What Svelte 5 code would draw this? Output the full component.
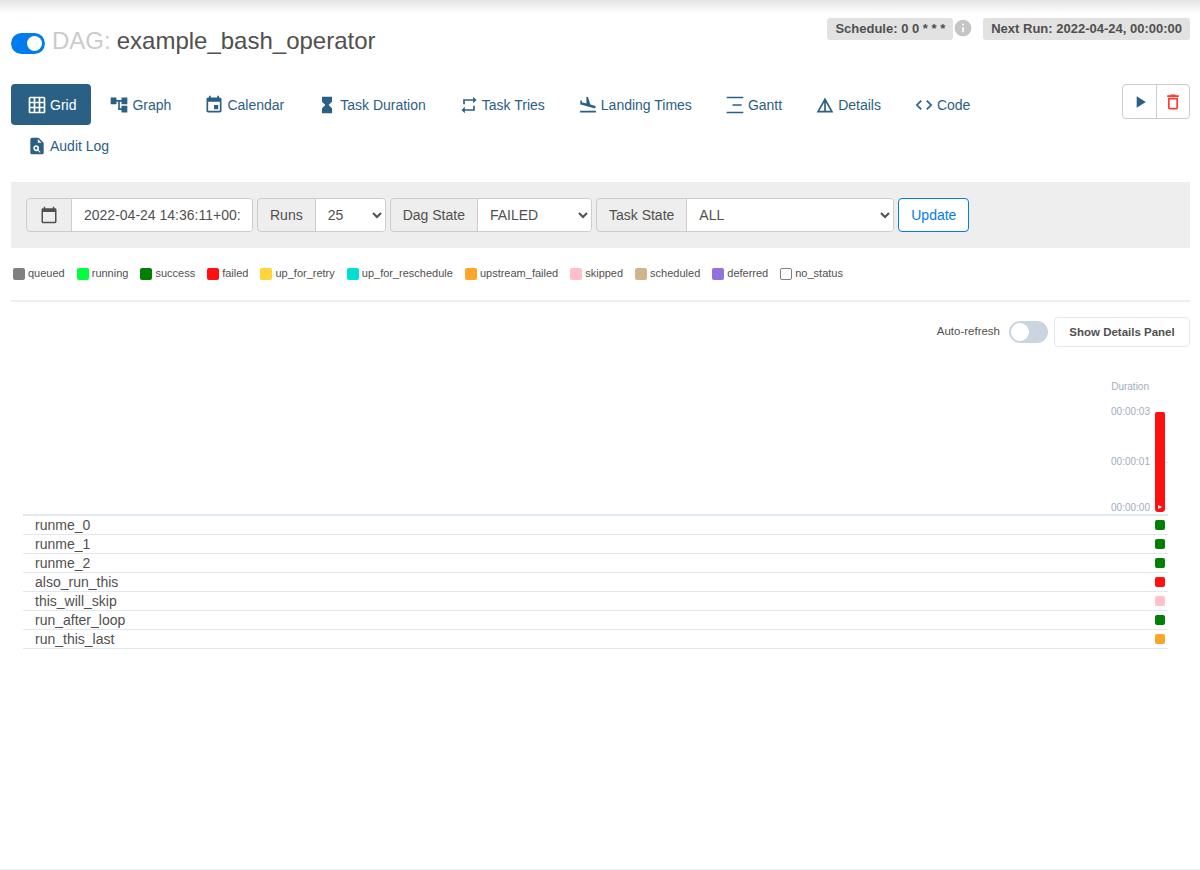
<script lang="ts">
	type Tab = { label: string; d: string; active?: boolean };

	const tabs: Tab[] = [
		{ label: 'Grid', active: true, d: 'M20 2H4c-1.1 0-2 .9-2 2v16c0 1.1.9 2 2 2h16c1.1 0 2-.9 2-2V4c0-1.1-.9-2-2-2zM8 20H4v-4h4v4zm0-6H4v-4h4v4zm0-6H4V4h4v4zm6 12h-4v-4h4v4zm0-6h-4v-4h4v4zm0-6h-4V4h4v4zm6 12h-4v-4h4v4zm0-6h-4v-4h4v4zm0-6h-4V4h4v4z' },
		{ label: 'Graph', d: 'M22 11V3h-7v3H9V3H2v8h7V8h2v10h4v3h7v-8h-7v3h-2V8h2v3z' },
		{ label: 'Calendar', d: 'M17 12h-5v5h5v-5zM16 1v2H8V1H6v2H5c-1.11 0-1.99.9-1.99 2L3 19c0 1.1.89 2 2 2h14c1.1 0 2-.9 2-2V5c0-1.1-.9-2-2-2h-1V1h-2zm3 18H5V8h14v11z' },
		{ label: 'Task Duration', d: 'M6 2v6h.01L6 8.01 10 12l-4 4 .01.01H6V22h12v-5.99h-.01L18 16l-4-4 4-3.99-.01-.01H18V2H6z' },
		{ label: 'Task Tries', d: 'M7 7h10v3l4-4-4-4v3H5v6h2V7zm10 10H7v-3l-4 4 4 4v-3h12v-6h-2v4z' },
		{ label: 'Landing Times', d: 'M2.5 19h19v2h-19v-2zm7.18-5.73l4.35 1.16 5.31 1.42c.8.21 1.62-.26 1.84-1.06.21-.8-.26-1.62-1.06-1.84l-5.31-1.42-2.76-9.02L10.12 2v8.28L5.15 8.95l-.93-2.32-1.45-.39v5.17l1.6.43 5.31 1.43z' },
		{ label: 'Gantt', d: 'M2 2h20v2H2V2zm0 18h20v2H2v-2zm7-9h11v2H9v-2z' },
		{ label: 'Details', d: 'M12 3L2 21h20L12 3zm1 5.92L18.6 19H13V8.92zm-2 0V19H5.4L11 8.92z' },
		{ label: 'Code', d: 'M9.4 16.6L4.8 12l4.6-4.6L8 6l-6 6 6 6 1.4-1.4zm5.2 0l4.6-4.6-4.6-4.6L16 6l6 6-6 6-1.4-1.4z' },
		{ label: 'Audit Log', d: 'M14 2H6C4.9 2 4 2.9 4 4v16c0 1.1.9 2 2 2h12c1.1 0 2-.9 2-2V8l-6-6zm1.5 18l-2.4-2.4c-.6.4-1.3.6-2.1.6-2 0-3.5-1.6-3.5-3.5s1.6-3.5 3.5-3.5 3.5 1.6 3.5 3.5c0 .8-.2 1.5-.6 2.1l2.4 2.4-.8.8zM13 8V3.5L17.5 8H13zm-2 5.2c-.8 0-1.5.7-1.5 1.5s.7 1.5 1.5 1.5 1.5-.7 1.5-1.5-.7-1.5-1.5-1.5z' }
	];

	const legend = [
		['queued', '#808080'],
		['running', '#00ff40'],
		['success', '#008000'],
		['failed', '#ff0f0f'],
		['up_for_retry', '#ffd53d'],
		['up_for_reschedule', '#00e0d0'],
		['upstream_failed', '#ffa52c'],
		['skipped', '#ffc0cb'],
		['scheduled', '#d2b48c'],
		['deferred', '#9370db'],
		['no_status', '#fff']
	];

	const tasks = [
		['runme_0', '#008000'],
		['runme_1', '#008000'],
		['runme_2', '#008000'],
		['also_run_this', '#ff0f0f'],
		['this_will_skip', '#ffc0cb'],
		['run_after_loop', '#008000'],
		['run_this_last', '#ffa52c']
	];

	let paused = $state(false);
	let autoRefresh = $state(false);
</script>

<div class="page">
	<div class="nav-shadow"></div>

	<main>
		<header class="title-row">
			<h3>
				<button
					class="dag-toggle"
					class:off={paused}
					aria-label="Pause DAG"
					onclick={() => (paused = !paused)}
				><span></span></button>
				<span class="dag-prefix">DAG:</span>
				<span class="dag-id">example_bash_operator</span>
			</h3>
			<div class="meta">
				<span class="pill">Schedule: 0 0 * * *</span>
				<svg class="info" viewBox="0 0 24 24"><path d="M12 2C6.48 2 2 6.48 2 12s4.48 10 10 10 10-4.48 10-10S17.52 2 12 2zm1 15h-2v-6h2v6zm0-8h-2V7h2v2z" /></svg>
				<span class="pill next">Next Run: 2022-04-24, 00:00:00</span>
			</div>
		</header>

		<div class="nav-row">
			<ul class="tabs">
				{#each tabs as tab (tab.label)}
					<li>
						<a href="#top" class:active={tab.active}>
							<svg viewBox="0 0 24 24"><path d={tab.d} fill-rule="evenodd" /></svg>
							{tab.label}
						</a>
					</li>
				{/each}
			</ul>
			<div class="actions">
				<button aria-label="Trigger DAG" class="play">
					<svg viewBox="0 0 24 24"><path d="M8 5v14l11-7z" /></svg>
				</button>
				<button aria-label="Delete DAG" class="trash">
					<svg viewBox="0 0 24 24"><path d="M6 19c0 1.1.9 2 2 2h8c1.1 0 2-.9 2-2V7H6v12zM8 9h8v10H8V9zm7.5-5l-1-1h-5l-1 1H5v2h14V4z" /></svg>
				</button>
			</div>
		</div>

		<form class="filters" onsubmit={(e) => e.preventDefault()}>
			<div class="group">
				<span class="addon cal">
					<svg viewBox="0 0 24 24"><path d="M20 3h-1V1h-2v2H7V1H5v2H4c-1.1 0-2 .9-2 2v16c0 1.1.9 2 2 2h16c1.1 0 2-.9 2-2V5c0-1.1-.9-2-2-2zm0 18H4V8h16v13z" /></svg>
				</span>
				<input class="date" type="text" value="2022-04-24 14:36:11+00:00" />
			</div>
			<div class="group">
				<span class="addon">Runs</span>
				<select class="runs"><option>25</option></select>
			</div>
			<div class="group">
				<span class="addon">Dag State</span>
				<select class="dag-state"><option>FAILED</option></select>
			</div>
			<div class="group">
				<span class="addon">Task State</span>
				<select class="task-state"><option>ALL</option></select>
			</div>
			<button class="update" type="submit">Update</button>
		</form>

		<div class="legend">
			{#each legend as [name, color] (name)}
				<span class="legend-item">
					<i class:empty={name === 'no_status'} style="background: {color}"></i>{name}
				</span>
			{/each}
		</div>

		<hr />

		<div class="panel-controls">
			<span class="auto-label">Auto-refresh</span>
			<button
				class="switch"
				class:on={autoRefresh}
				aria-label="Auto-refresh"
				onclick={() => (autoRefresh = !autoRefresh)}
			><span></span></button>
			<button class="details-btn">Show Details Panel</button>
		</div>

		<section class="grid">
			<div class="chart">
				<div class="axis">
					<div class="axis-title">Duration</div>
					<div class="tick t3"><span>00:00:03</span><b></b></div>
					<div class="tick t1"><span>00:00:01</span><b></b></div>
					<div class="tick t0"><span>00:00:00</span><b></b></div>
				</div>
				<div class="bar"><em></em></div>
			</div>
			<div class="rows">
				{#each tasks as [name, color] (name)}
					<div class="row">
						<span>{name}</span>
						<i style="background: {color}"></i>
					</div>
				{/each}
			</div>
		</section>
	</main>

	<footer></footer>
</div>

<style>
	:global(body) {
		margin: 0;
		background: #fff;
		color: #51504f;
		font-family: 'Liberation Sans', Arial, sans-serif;
		font-size: 14px;
	}
	.page {
		display: flex;
		flex-direction: column;
		height: 870px;
		overflow: hidden;
	}
	.nav-shadow {
		flex: none;
		height: 14px;
		background: linear-gradient(#e4e4e4, #fff);
	}
	main {
		flex: 1;
		padding: 0 10px 0 11px;
	}
	footer {
		flex: none;
		height: 1px;
		background: #e8ecef;
	}

	.title-row {
		display: flex;
		justify-content: space-between;
		align-items: flex-start;
		height: 70px;
	}
	h3 {
		display: flex;
		align-items: center;
		margin: 11px 0 0;
		height: 32px;
		font-size: 24px;
		font-weight: 400;
		line-height: 32px;
	}
	.dag-toggle {
		position: relative;
		width: 34px;
		height: 21px;
		margin: 4px 7px 0 0;
		padding: 0;
		border: 0;
		border-radius: 11px;
		background: #017cee;
	}
	.dag-toggle span {
		position: absolute;
		top: 3px;
		right: 3px;
		width: 15px;
		height: 15px;
		border-radius: 50%;
		background: #fff;
	}
	.dag-toggle.off {
		background: #cbd5e0;
	}
	.dag-toggle.off span {
		right: 16px;
	}
	.dag-prefix {
		color: #cbcbcb;
		margin-right: 6px;
	}
	.meta {
		display: flex;
		align-items: flex-start;
		margin-top: 4px;
	}
	.pill {
		height: 22px;
		padding: 0 8px;
		border-radius: 3px;
		background: #e2e2e2;
		font-size: 13px;
		font-weight: 700;
		line-height: 22px;
	}
	.info {
		width: 20px;
		height: 20px;
		margin: 0 10px 0 0;
		fill: #c5c5c5;
	}
	.nav-row {
		display: flex;
		justify-content: space-between;
		align-items: flex-start;
	}
	.tabs {
		display: flex;
		flex-wrap: wrap;
		gap: 0 2px;
		width: 1000px;
		margin: 0;
		padding: 0;
		list-style: none;
	}
	.tabs a {
		display: flex;
		align-items: center;
		gap: 3px;
		height: 41px;
		padding: 0 15px 0 16px;
		border-radius: 4px;
		color: #2b6085;
		font-size: 14px;
		text-decoration: none;
	}
	.tabs a.active {
		background: #2b6085;
		color: #fff;
	}
	.tabs svg {
		width: 20px;
		height: 20px;
		fill: currentColor;
	}
	.actions {
		display: flex;
		height: 35px;
		border: 1px solid #ccc;
		border-radius: 4px;
		box-sizing: border-box;
		background: #fff;
	}
	.actions button {
		display: flex;
		align-items: center;
		justify-content: center;
		width: 33px;
		padding: 0;
		border: 0;
		background: none;
	}
	.actions .trash {
		border-left: 1px solid #ccc;
	}
	.actions svg {
		width: 20px;
		height: 20px;
	}
	.play svg {
		fill: #2b6085;
	}
	.trash svg {
		fill: #ff3b30;
	}

	.filters {
		display: flex;
		gap: 4px;
		height: 66px;
		margin-top: 16px;
		padding: 16px 15px;
		box-sizing: border-box;
		background: #eee;
	}
	.group {
		display: flex;
		height: 34px;
		border: 1px solid #ccc;
		border-radius: 4px;
		box-sizing: border-box;
		background: #eee;
		overflow: hidden;
	}
	.addon {
		display: flex;
		align-items: center;
		padding: 0 12px;
		border-right: 1px solid #ccc;
		font-size: 14px;
	}
	.addon.cal {
		padding: 0 13px;
	}
	.addon svg {
		width: 18px;
		height: 18px;
		fill: #51504f;
	}
	.group input,
	.group select {
		height: 100%;
		box-sizing: border-box;
		border: 0;
		outline: 0;
		background: #fff;
		color: #51504f;
		font-family: inherit;
		font-size: 14px;
	}
	.date {
		width: 180px;
		padding: 0 12px;
	}
	.group select {
		padding: 0 8px;
	}
	.runs {
		width: 69px;
	}
	.dag-state {
		width: 113px;
	}
	.task-state {
		width: 206px;
	}
	.update {
		height: 34px;
		width: 71px;
		padding: 0;
		border: 1px solid #017cee;
		border-radius: 4px;
		background: #fff;
		color: #017cee;
		font-family: inherit;
		font-size: 14px;
	}

	.legend {
		display: flex;
		gap: 12px;
		margin-top: 19px;
		padding-left: 2px;
		height: 13px;
		font-size: 11px;
		line-height: 13px;
	}
	.legend-item {
		display: flex;
		align-items: center;
		gap: 3px;
	}
	.legend-item i {
		width: 12px;
		height: 12px;
		border-radius: 2px;
	}
	.legend-item i.empty {
		box-sizing: border-box;
		border: 1px solid #808080;
	}
	hr {
		height: 2px;
		margin: 20px 0 0;
		border: 0;
		background: #eee;
	}

	.panel-controls {
		display: flex;
		justify-content: flex-end;
		align-items: center;
		height: 30px;
		margin-top: 15px;
	}
	.auto-label {
		margin: -3px 9px 0 0;
		font-size: 11.5px;
	}
	.switch {
		position: relative;
		width: 39px;
		height: 22px;
		margin-right: 6px;
		padding: 0;
		border: 0;
		border-radius: 11px;
		background: #cbd5e0;
	}
	.switch span {
		position: absolute;
		top: 2px;
		left: 2px;
		width: 18px;
		height: 18px;
		border-radius: 50%;
		background: #fff;
	}
	.switch.on {
		background: #017cee;
	}
	.switch.on span {
		left: 19px;
	}
	.details-btn {
		width: 136px;
		height: 30px;
		padding: 0;
		border: 1px solid #e2e8f0;
		border-radius: 4px;
		background: #fff;
		color: #51504f;
		font-family: inherit;
		font-size: 11.5px;
		font-weight: 700;
	}

	.grid {
		margin: 0 22px 0 12px;
	}
	.chart {
		display: flex;
		justify-content: flex-end;
		align-items: flex-end;
		height: 167px;
		padding-top: 0;
	}
	.axis {
		margin-right: -13px;
		color: #a0aec0;
		font-size: 10px;
		line-height: 12px;
	}
	.axis-title {
		margin: 0 19px 13px 0;
		text-align: right;
	}
	.tick {
		display: flex;
		align-items: center;
	}
	.tick b {
		width: 13px;
		height: 1px;
		margin-left: 5px;
		background: #e2e8f0;
	}
	.t1 {
		margin-top: 38px;
	}
	.t0 {
		margin-top: 34px;
	}
	.bar {
		position: relative;
		width: 10px;
		height: 100px;
		margin: 0 3px 2px 0;
		border-radius: 2px 2px 3px 3px;
		background: #ff0f0f;
	}
	.bar em {
		position: absolute;
		left: 3px;
		bottom: 3px;
		border-left: 4px solid #fff;
		border-top: 2px solid transparent;
		border-bottom: 2px solid transparent;
	}
	.rows {
		border-top: 2px solid #e2e8f0;
	}
	.row {
		display: flex;
		justify-content: space-between;
		align-items: center;
		height: 18px;
		padding: 0 3px 0 12px;
		border-bottom: 1px solid #e2e8f0;
		font-size: 14px;
	}
	.row i {
		width: 10px;
		height: 10px;
		border-radius: 2px;
	}
</style>
